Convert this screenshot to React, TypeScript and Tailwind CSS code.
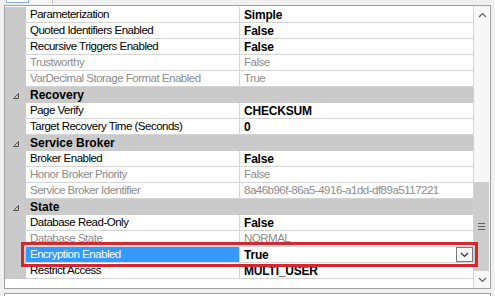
import type { ReactNode } from 'react';

type Prop = {
  kind: 'prop';
  name: string;
  value: string;
  disabled?: boolean;
  selected?: boolean;
};
type Category = { kind: 'cat'; name: string };
type Row = Prop | Category;

const rows: Row[] = [
  { kind: 'prop', name: 'Parameterization', value: 'Simple' },
  { kind: 'prop', name: 'Quoted Identifiers Enabled', value: 'False' },
  { kind: 'prop', name: 'Recursive Triggers Enabled', value: 'False' },
  { kind: 'prop', name: 'Trustworthy', value: 'False', disabled: true },
  { kind: 'prop', name: 'VarDecimal Storage Format Enabled', value: 'True', disabled: true },
  { kind: 'cat', name: 'Recovery' },
  { kind: 'prop', name: 'Page Verify', value: 'CHECKSUM' },
  { kind: 'prop', name: 'Target Recovery Time (Seconds)', value: '0' },
  { kind: 'cat', name: 'Service Broker' },
  { kind: 'prop', name: 'Broker Enabled', value: 'False' },
  { kind: 'prop', name: 'Honor Broker Priority', value: 'False', disabled: true },
  {
    kind: 'prop',
    name: 'Service Broker Identifier',
    value: '8a46b96f-86a5-4916-a1dd-df89a5117221',
    disabled: true,
  },
  { kind: 'cat', name: 'State' },
  { kind: 'prop', name: 'Database Read-Only', value: 'False' },
  { kind: 'prop', name: 'Database State', value: 'NORMAL', disabled: true },
  { kind: 'prop', name: 'Encryption Enabled', value: 'True', selected: true },
  { kind: 'prop', name: 'Restrict Access', value: 'MULTI_USER' },
];

function Chevron({ up = false, color = '#606060' }: { up?: boolean; color?: string }) {
  return (
    <svg width="9" height="6" viewBox="0 0 9 6" className="block">
      <polyline
        points={up ? '1,5 4.5,1.5 8,5' : '1,1 4.5,4.5 8,1'}
        fill="none"
        stroke={color}
        strokeWidth="1.2"
      />
    </svg>
  );
}

function CategoryRow({ name }: { name: string }) {
  return (
    <div className="flex h-4 items-center bg-[#cacaca]">
      <div className="flex w-[21px] shrink-0 justify-start pl-[8px] pt-[2px]">
        <svg width="6" height="6" viewBox="0 0 6 6" className="block">
          <polygon points="5.5,0.5 5.5,5.5 0.5,5.5" fill="none" stroke="#505050" strokeWidth="1" />
        </svg>
      </div>
      <span className="pl-[4px] text-[12px] font-bold leading-none">{name}</span>
    </div>
  );
}

function PropRow({ row }: { row: Prop }) {
  const nameCls = row.selected
    ? 'bg-[#3399ff] text-white'
    : row.disabled
      ? 'text-[#8c8c8c]'
      : 'text-black';
  const valueCls = row.disabled
    ? 'text-[11.5px] tracking-[-0.5px] text-[#8c8c8c]'
    : 'text-[12px] font-bold tracking-[-0.2px] text-black';

  return (
    <div className="flex h-4">
      <div className="w-[21px] shrink-0 bg-[#cacaca]" />
      <div
        className={`flex w-[214px] shrink-0 items-center border-r border-b border-[#d4d4d4] pl-[4px] text-[11.5px] tracking-[-0.5px] leading-none ${nameCls}`}
      >
        {row.name}
      </div>
      <div className="flex min-w-0 flex-1 items-center justify-between border-b border-[#d4d4d4] pl-[4px]">
        <span className={`leading-none whitespace-nowrap ${valueCls}`}>{row.value}</span>
        {row.selected && (
          <div className="flex h-[15px] w-[17px] items-center justify-center border border-[#7a7a7a] bg-[#f6f6f6]">
            <Chevron color="#333333" />
          </div>
        )}
      </div>
    </div>
  );
}

function ScrollBar() {
  return (
    <div className="flex w-[17px] shrink-0 flex-col border-l border-[#d4d4d4] bg-[#f7f7f7]">
      <div className="flex h-[17px] items-center justify-center">
        <Chevron up />
      </div>
      <div className="flex flex-1 flex-col justify-end">
        <div className="mr-px flex h-[89px] flex-col items-center justify-center gap-[2px] bg-[#cdcdcd]">
          <div className="h-px w-[7px] bg-[#606060]" />
          <div className="h-px w-[7px] bg-[#606060]" />
          <div className="h-px w-[7px] bg-[#606060]" />
        </div>
      </div>
      <div className="flex h-[17px] items-center justify-center">
        <Chevron />
      </div>
    </div>
  );
}

function Frame({ children }: { children: ReactNode }) {
  return (
    <div className="relative ml-[4px] flex h-[284px] w-[487px] border border-[#a0a0a0] bg-white">
      {children}
    </div>
  );
}

export default function App() {
  return (
    <div className="h-[296px] w-[495px] overflow-hidden bg-[#f0f0f0] font-['Liberation_Sans',Arial,sans-serif] text-black">
      {/* toolbar remnants */}
      <div className="flex h-[5px] items-start">
        <div className="ml-[6px] h-[3px] w-[23px] border-x border-b border-[#86aedb] bg-white" />
        <div className="h-[4px] w-[24px] border-r border-[#c0c0c0] bg-[#f7f7f7]" />
      </div>

      <Frame>
        <div className="flex min-w-0 flex-1 flex-col pt-px">
          {rows.map((r, i) =>
            r.kind === 'cat' ? <CategoryRow key={i} name={r.name} /> : <PropRow key={i} row={r} />
          )}
        </div>
        <ScrollBar />

        {/* highlight box */}
        <div className="pointer-events-none absolute top-[236px] left-[16px] h-[25px] w-[457px] border-[3px] border-[#d7262f]" />
      </Frame>

      {/* description panel */}
      <div className="mt-[4px] ml-[4px] h-[10px] w-[487px] border border-[#a0a0a0] bg-white" />
    </div>
  );
}
